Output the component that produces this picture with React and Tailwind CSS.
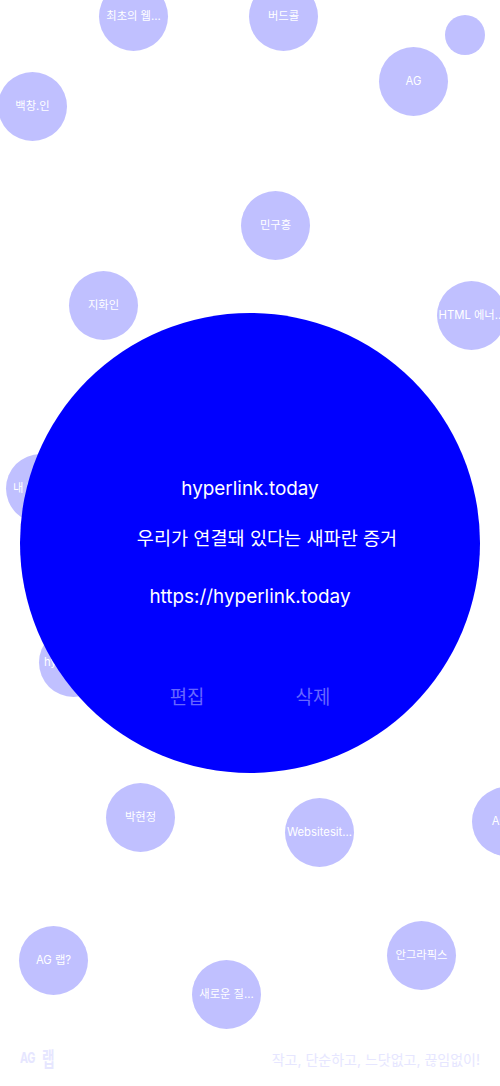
const FONT = "font-['Inter','Noto_Sans_CJK_KR',sans-serif]";

// 화면에 흩어진 링크 버블
const bubbles = [
  { label: "최초의 웹...", pos: "left-[99px] top-[-18px]" },
  { label: "버드콜", pos: "left-[249px] top-[-18px]" },
  { label: "AG", pos: "left-[379px] top-[47px]" },
  { label: "백창.인", pos: "left-[-2px] top-[72px]" },
  { label: "민구홍", pos: "left-[241px] top-[191px]" },
  { label: "지화인", pos: "left-[69px] top-[271px]" },
  { label: "HTML 에너...", pos: "left-[437px] top-[281px]" },
  { label: "내 웹사이트", pos: "left-[6px] top-[454px]" },
  { label: "hyperlink...", pos: "left-[39px] top-[628px]" },
  { label: "박현정", pos: "left-[106px] top-[783px]" },
  { label: "Websitesit...", pos: "left-[285px] top-[798px]" },
  { label: "AG 랩", pos: "left-[472px] top-[787px]" },
  { label: "AG 랩?", pos: "left-[19px] top-[926px]" },
  { label: "새로운 질...", pos: "left-[192px] top-[960px]" },
  { label: "안그라픽스", pos: "left-[387px] top-[921px]" },
];

const Bubble = ({ label, pos }) => (
  <div
    className={`absolute ${pos} w-[69px] h-[69px] rounded-full bg-[#c0c0ff] flex items-center justify-center pb-[1px] text-[11.3px] leading-4 text-white whitespace-nowrap`}
  >
    {label}
  </div>
);

export default function App() {
  return (
    <div className={`relative h-[1086px] overflow-hidden bg-white flex flex-col justify-end ${FONT}`}>
      {bubbles.map((b) => (
        <Bubble key={b.label} {...b} />
      ))}
      <div className="absolute left-[445px] top-[15px] w-10 h-10 rounded-full bg-[#c0c0ff]" />

      {/* 선택된 링크 */}
      <div className="absolute left-5 top-[313px] w-[460px] h-[460px] rounded-full bg-[#0000ff] flex flex-col items-center pt-[162px] text-[18.9px] leading-7 text-white">
        <p>hyperlink.today</p>
        <p className="mt-[21px] pl-[34px] text-[18.6px]">우리가 연결돼 있다는 새파란 증거</p>
        <p className="mt-[31px]">https://hyperlink.today</p>
        <div className="mt-[73px] flex gap-[91px] text-[#6666ff]">
          <button>편집</button>
          <button>삭제</button>
        </div>
      </div>

      <footer className="flex items-center justify-between px-5 pb-[16px] text-[#e6e6ff]">
        <span className="flex items-start font-bold leading-none -mt-px">
          <span className="w-[22px] text-[15px] tracking-[-0.5px] scale-x-[0.72] origin-left">AG</span>
          <span className="text-[20px] scale-x-[0.68] origin-left">랩</span>
        </span>
        <span className="text-sm">작고, 단순하고, 느닷없고, 끊임없이!</span>
      </footer>
    </div>
  );
}
